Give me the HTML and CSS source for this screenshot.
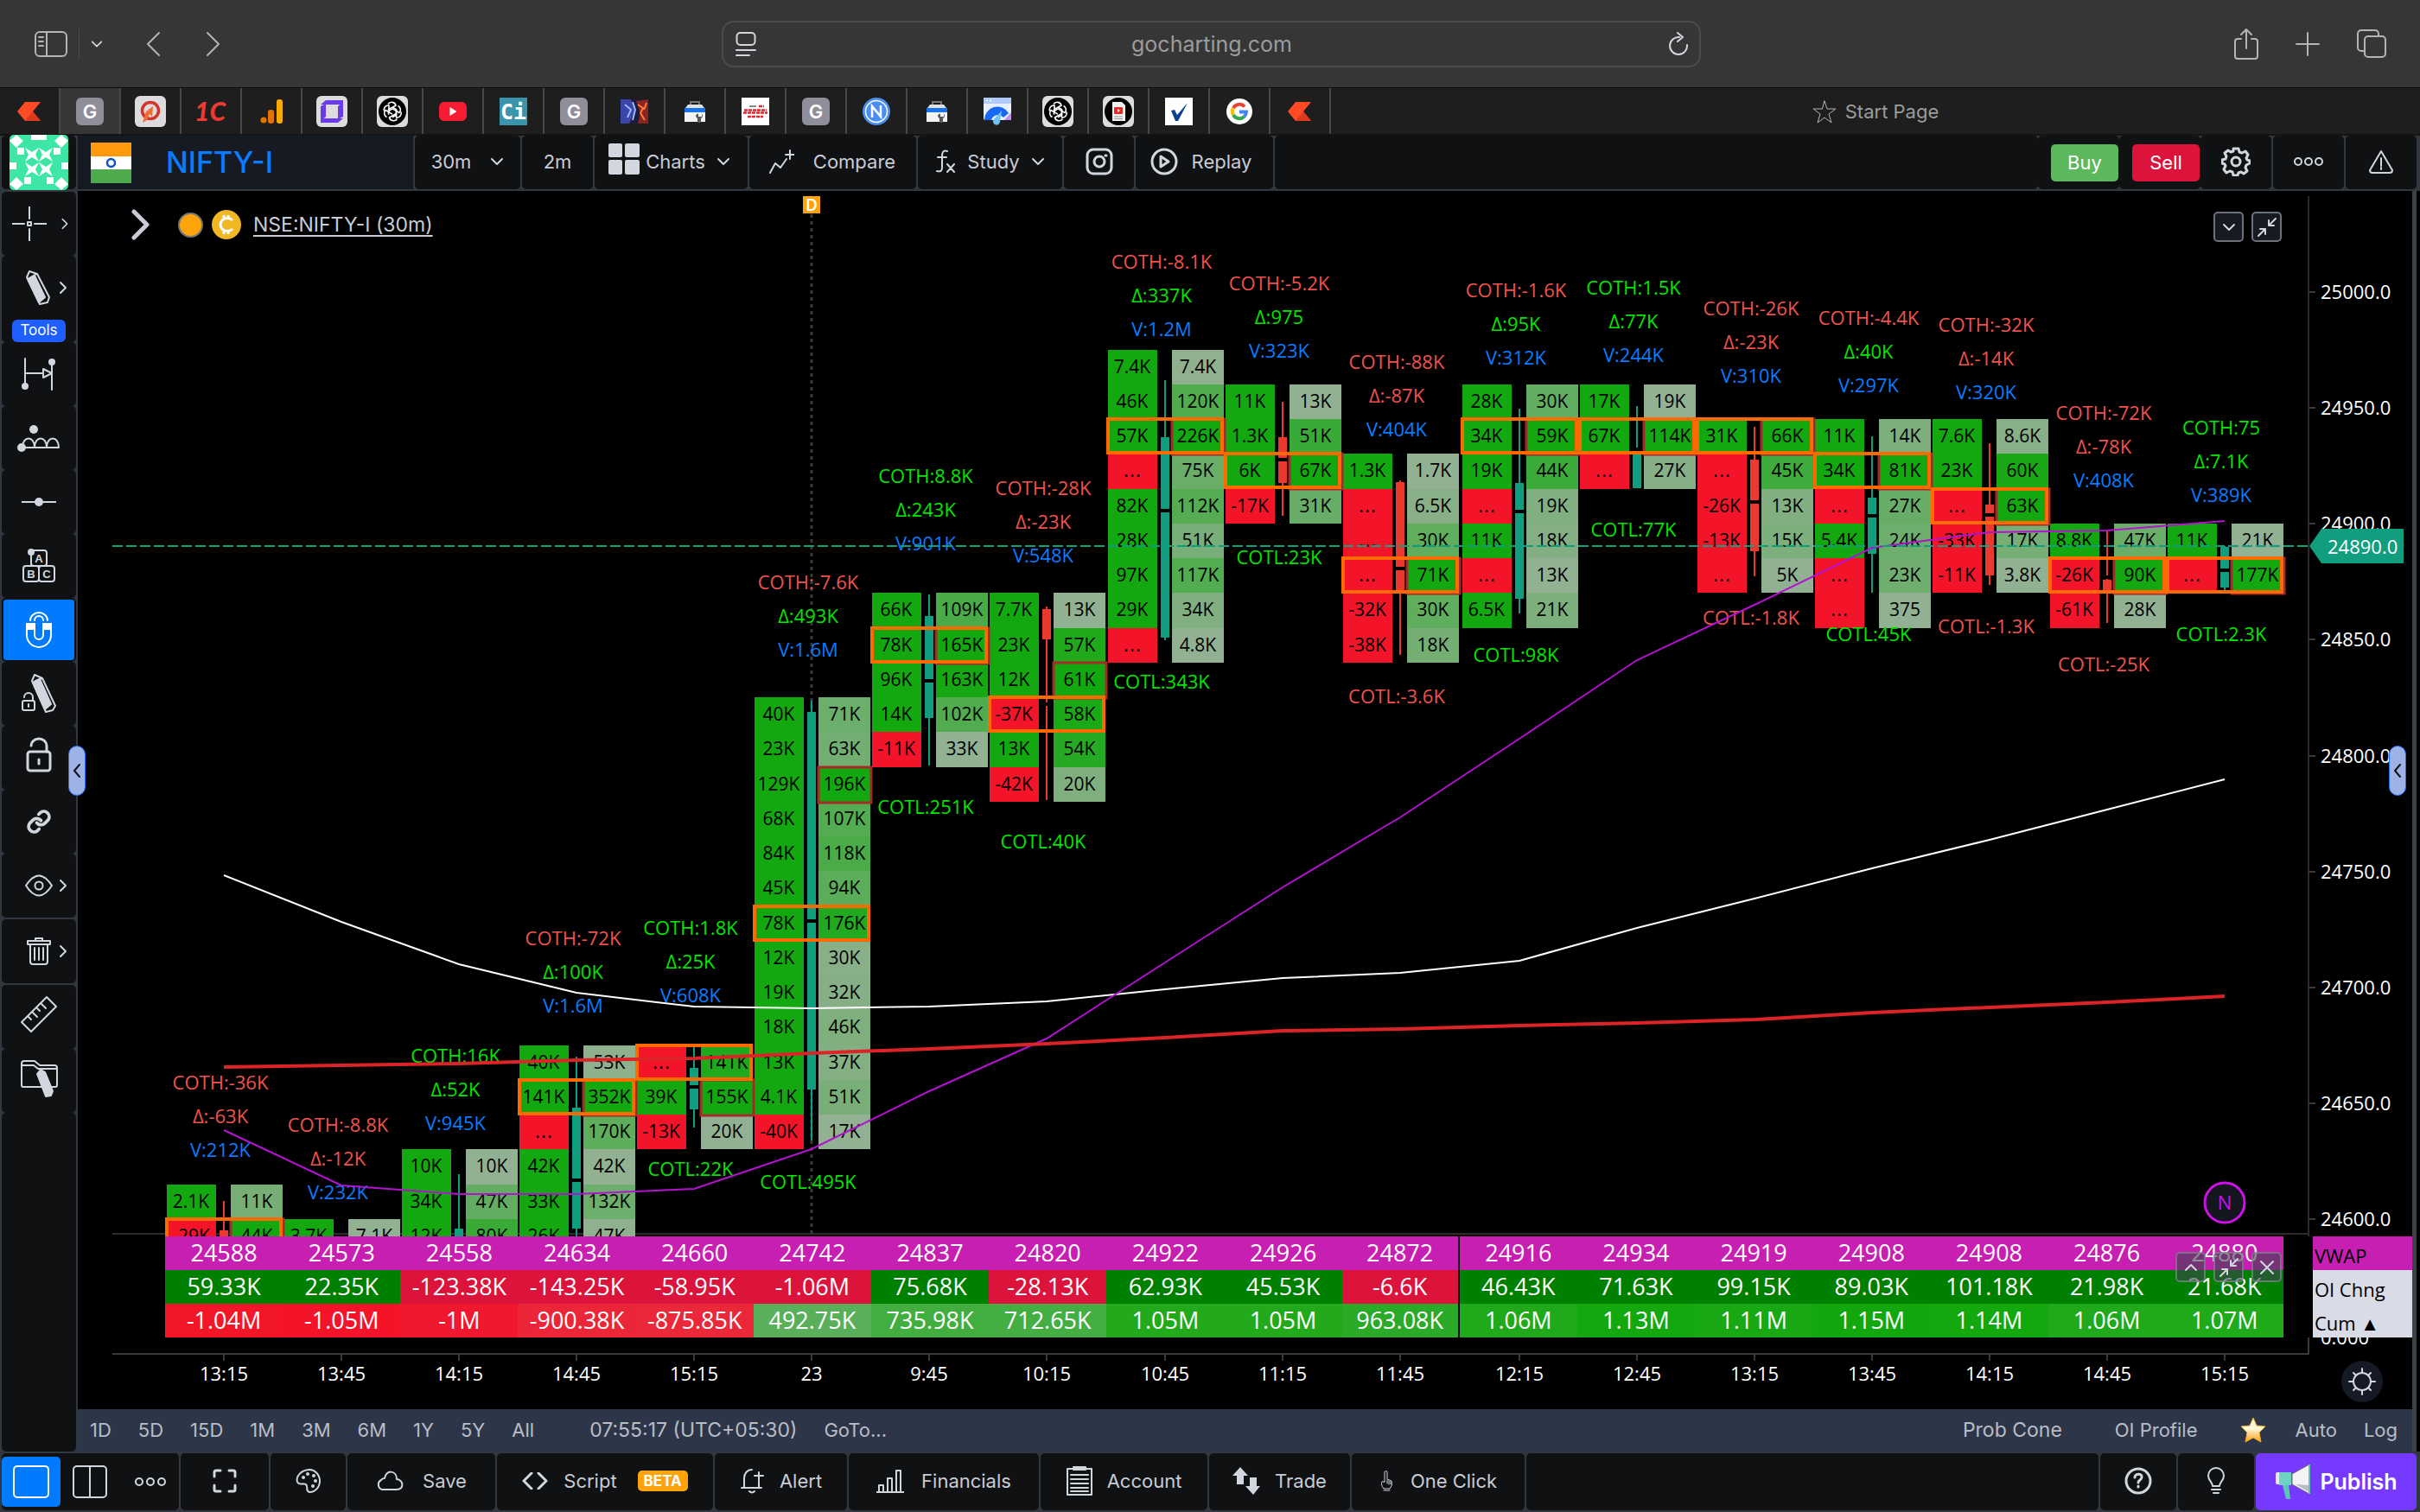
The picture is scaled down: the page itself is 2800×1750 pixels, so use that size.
FILE: index.html
```html
<!DOCTYPE html>
<html lang="en">
<head>
<meta charset="utf-8">
<title>NIFTY-I 30m</title>
<link rel="stylesheet" href="styles.css">
</head>
<body>
<svg class="sprite" aria-hidden="true">
  <symbol id="chev-down" viewBox="0 0 16 16"><path d="M2 5l6 6 6-6"/></symbol>
  <symbol id="chev-right" viewBox="0 0 16 16"><path d="M5 2l6 6-6 6"/></symbol>
  <symbol id="chev-left" viewBox="0 0 16 16"><path d="M11 1L5 8l6 7"/></symbol>
  <symbol id="shrink" viewBox="0 0 24 24"><path d="M22 2l-8 8M14 4v6h6M2 22l8-8M10 20v-6H4"/></symbol>
  <symbol id="fav-kite" viewBox="0 0 32 32"><path d="M2 16L11 5h18L20 16l9 11H11z" fill="#ff4a26"/><path d="M20 16l9 11H11z" fill="#dc3a1c"/></symbol>
  <symbol id="fav-g" viewBox="0 0 32 32"><rect width="32" height="32" rx="6" fill="#8f8e9b"/><text x="16" y="24" font-size="22" font-weight="600" text-anchor="middle" fill="#fff">G</text></symbol>
  <symbol id="fav-ai" viewBox="0 0 36 36"><rect width="36" height="36" rx="6" fill="#dcdcdc"/><circle cx="18" cy="18" r="16" fill="#000"/><g fill="none" stroke="#fff" stroke-width="1.6"><path d="M18 13l4.500 2.600v6.500l-4.500 2.600M13 9.500a5 5 0 0 1 9 1.500l-8.500 4.800v6"/><path d="M24.500 11.500a5 5 0 0 1 1.500 8l-7.800-4.600-5 3"/><path d="M28 18.500a5 5 0 0 1-5.500 6.500V16"/><path d="M23.500 26.500a5 5 0 0 1-9-1.500l8-4.500"/><path d="M11.500 24.500a5 5 0 0 1-1.500-8l8 4.600"/><path d="M8.500 17.500A5 5 0 0 1 14 11v9"/></g></symbol>
  <symbol id="fav-box" viewBox="0 0 32 32"><path d="M11 9V5h10v4" fill="none" stroke="#777" stroke-width="2"/><path d="M5 12l3-4h16l3 4z" fill="#dfe1e5"/><rect x="4" y="12" width="24" height="16" fill="#f1f3f4"/><rect x="4" y="12" width="24" height="5" fill="#1a73e8"/><path d="M17 21a3.500 3.500 0 0 0 2 3v5h4v-5a3.500 3.500 0 0 0 1-5.500V22h-4v-3.500a3 3 0 0 0-3 2.500z" fill="#555"/></symbol>
</svg>

<div class="browser">
  <div class="browser-side">
    <button class="plain" aria-label="Sidebar"><svg class="line" width="38" height="30" viewBox="0 0 38 30"><rect x="1" y="1" width="36" height="28" rx="5"/><path d="M14 1v28M5 7h5M5 12h5M5 17h5"/></svg></button>
    <span class="bar-sep"></span>
    <button class="plain" aria-label="Tab groups"><svg class="line bright" width="14" height="14" viewBox="0 0 16 16"><use href="#chev-down"/></svg></button>
    <div class="browser-nav">
      <button class="plain" aria-label="Back"><svg class="line" width="18" height="30" viewBox="0 0 18 30"><path d="M16 2L3 15l13 13"/></svg></button>
      <button class="plain" aria-label="Forward"><svg class="line" width="18" height="30" viewBox="0 0 18 30"><path d="M2 2l13 13L2 28"/></svg></button>
    </div>
  </div>
  <div class="address">
    <svg class="line bright" width="24" height="30" viewBox="0 0 24 30"><rect x="1.500" y="2" width="21" height="14" rx="4"/><path d="M1 22h22M1 28h15"/></svg>
    <input type="text" value="gocharting.com" aria-label="Address">
    <button class="plain" aria-label="Reload"><svg class="line bright" width="24" height="28" viewBox="0 0 24 28"><path d="M13 6a10 10 0 1 0 9 9M11 1l6 5-6 5"/></svg></button>
  </div>
  <div class="browser-actions">
    <button class="plain" aria-label="Share"><svg class="line" width="30" height="38" viewBox="0 0 30 38"><path d="M9 13H5a3 3 0 0 0-3 3v17a3 3 0 0 0 3 3h20a3 3 0 0 0 3-3V16a3 3 0 0 0-3-3h-4M15 24V2M9 8l6-6 6 6"/></svg></button>
    <button class="plain" aria-label="New tab"><svg class="line" width="28" height="28" viewBox="0 0 28 28"><path d="M14 1v26M1 14h26"/></svg></button>
    <button class="plain" aria-label="Tab overview"><svg class="line" width="36" height="36" viewBox="0 0 36 36"><rect x="10" y="9" width="24" height="24" rx="4"/><path d="M10 26H6a4 4 0 0 1-4-4V6a4 4 0 0 1 4-4h16a4 4 0 0 1 4 4v3"/></svg></button>
  </div>
</div>

<nav class="tabs">
  <a class="tab" href="#" aria-label="Tab 1"><svg width="32" height="32"><use href="#fav-kite"/></svg></a>
  <a class="tab active" href="#" aria-label="Tab 2"><svg width="32" height="32"><use href="#fav-g"/></svg></a>
  <a class="tab" href="#" aria-label="Tab 3"><svg width="36" height="36" viewBox="0 0 36 36"><rect width="36" height="36" rx="6" fill="#dcdcdc"/><circle cx="18" cy="17" r="9.500" fill="none" stroke="#d4322c" stroke-width="3.500"/><path d="M9 31l4-13 8-6-1 12-3-3-3 7z" fill="#ef6b2e"/></svg></a>
  <a class="tab" href="#" aria-label="Tab 4"><svg width="36" height="32" viewBox="0 0 36 32"><text x="17" y="27" class="fav-1c">1C</text></svg></a>
  <a class="tab" href="#" aria-label="Tab 5"><svg width="32" height="32" viewBox="0 0 32 32"><circle cx="7" cy="26" r="3.500" fill="#e37400"/><rect x="12" y="14" width="7" height="16" rx="3" fill="#e37400"/><rect x="22" y="2" width="7" height="28" rx="3" fill="#f9ab00"/></svg></a>
  <a class="tab" href="#" aria-label="Tab 6"><svg width="36" height="36" viewBox="0 0 36 36"><rect width="36" height="36" rx="6" fill="#dcdcdc"/><path d="M5 10l6-5h20v5zM31 26l-6 5H5v-5zM5 12l6-3v15l-6 5zM31 7v17l-6 3V12z" fill="#6a3be8"/></svg></a>
  <a class="tab" href="#" aria-label="Tab 7"><svg width="36" height="36"><use href="#fav-ai"/></svg></a>
  <a class="tab" href="#" aria-label="Tab 8"><svg width="32" height="32" viewBox="0 0 32 32"><rect y="5" width="32" height="22" rx="6" fill="#f61c34"/><path d="M12.500 11v10l8-5z" fill="#fff"/></svg></a>
  <a class="tab" href="#" aria-label="Tab 9"><svg width="32" height="32" viewBox="0 0 32 32"><rect width="32" height="32" fill="#3a94ac"/><text x="16" y="25" class="fav-ci">Ci</text></svg></a>
  <a class="tab" href="#" aria-label="Tab 10"><svg width="32" height="32"><use href="#fav-g"/></svg></a>
  <a class="tab" href="#" aria-label="Tab 11"><svg width="32" height="32" viewBox="0 0 32 32"><rect y="2" width="32" height="28" fill="#1d1c3c"/><path d="M0 2h12l5 12-7 16H0z" fill="#3945a8"/><path d="M18 4l14-2v28H20l3-12z" fill="#8c2420"/><path d="M5 8l7 6-4 9M14 5l3 9-3 12" stroke="#9fb4ff" stroke-width="2" fill="none"/><path d="M20 8l6 4-3 6 5 8M30 6l-3 8" stroke="#ff7a3c" stroke-width="2" fill="none"/></svg></a>
  <a class="tab" href="#" aria-label="Tab 12"><svg width="32" height="32"><use href="#fav-box"/></svg></a>
  <a class="tab" href="#" aria-label="Tab 13"><svg width="32" height="32" viewBox="0 0 32 32"><rect width="32" height="32" fill="#fff"/><path d="M9 10h8" stroke="#888" stroke-width="2"/><path d="M20 10h6M3 14.500h26M2 17.500h28M7 22h18" stroke="#e0232c" stroke-width="2.500" stroke-dasharray="4 1"/></svg></a>
  <a class="tab" href="#" aria-label="Tab 14"><svg width="32" height="32"><use href="#fav-g"/></svg></a>
  <a class="tab" href="#" aria-label="Tab 15"><svg width="32" height="32" viewBox="0 0 32 32"><circle cx="16" cy="16" r="16" fill="#4a8ff0"/><circle cx="16" cy="16" r="12.500" fill="none" stroke="#fff" stroke-width="1.500"/><path d="M11 23V10l10 12V9" fill="none" stroke="#fff" stroke-width="2.500"/></svg></a>
  <a class="tab" href="#" aria-label="Tab 16"><svg width="32" height="32"><use href="#fav-box"/></svg></a>
  <a class="tab" href="#" aria-label="Tab 17"><svg width="32" height="32" viewBox="0 0 32 32"><rect width="32" height="26" rx="2" fill="#e8f0fe"/><rect width="32" height="7" fill="#aecbfa"/><circle cx="4" cy="3.500" r="1" fill="#fff"/><circle cx="8" cy="3.500" r="1" fill="#fff"/><path d="M1 26a15 15 0 0 1 28-8l-6 5a8 8 0 0 0-14 3z" fill="#1967f2"/><path d="M32 17v9h-8z" fill="#c58af9"/><path d="M21 15l-9 10a4 4 0 1 0 7 3z" fill="#6fc3f0"/></svg></a>
  <a class="tab" href="#" aria-label="Tab 18"><svg width="36" height="36"><use href="#fav-ai"/></svg></a>
  <a class="tab" href="#" aria-label="Tab 19"><svg width="36" height="36" viewBox="0 0 36 36"><rect width="36" height="36" rx="6" fill="#dcdcdc"/><circle cx="18" cy="18" r="16" fill="#000"/><path d="M11 7h11l4 4v18H11z" fill="#f1f1f1"/><rect x="13" y="13" width="10" height="8" rx="1" fill="#e32b2b"/><path d="M17 15v4l3-2z" fill="#fff"/><path d="M13 24h10M13 26.500h10" stroke="#999"/></svg></a>
  <a class="tab" href="#" aria-label="Tab 20"><svg width="32" height="32" viewBox="0 0 32 32"><rect width="32" height="32" fill="#fff"/><path d="M7 15l4-1 3 6L26 6 15 27h-3z" fill="#0b3f91"/></svg></a>
  <a class="tab" href="#" aria-label="Tab 21"><svg width="32" height="32" viewBox="0 0 32 32"><circle cx="16" cy="16" r="15" fill="#fff"/><g fill="none" stroke-width="4"><path d="M22 10.500A8 8 0 0 0 9 12" stroke="#ea4335"/><path d="M9 12a8 8 0 0 0 0 8" stroke="#fbbc05"/><path d="M9 20a8 8 0 0 0 12.500 2" stroke="#34a853"/><path d="M21.500 22a8 8 0 0 0 2.500-5.500H16" stroke="#4285f4"/></g></svg></a>
  <a class="tab" href="#" aria-label="Tab 22"><svg width="32" height="32"><use href="#fav-kite"/></svg></a>
  <a class="tab start" href="#"><svg class="line thin" width="28" height="28" viewBox="0 0 28 28"><path d="M14 2l3 9h10l-8 6 3 10-8-6-8 6 3-10-8-6h10z"/></svg>Start Page</a>
</nav>

<header class="topbar">
  <div class="cell avatar">
    <svg width="68" height="64" viewBox="0 0 68 64"><rect width="68" height="64" rx="5" fill="#3ee6a6"/>
      <g fill="#fff"><path d="M8 0l8 7-8 8-8-8zM60 0l8 7-8 8-8-8zM8 49l8 8-8 7-8-7zM60 49l8 8-8 7-8-7zM25 0h18v6H25zM9 15h8v8H9zM51 15h8v8h-8zM17 49h8v8h-8zM43 49h8v8h-8zM0 32h8v8H0zM60 32h8v8h-8z"/>
      <path d="M18 15l8 5 8-5-4 8 4 8-8-5-8 5 4-8zM34 15l8 5 8-5-4 8 4 8-8-5-8 5 4-8zM18 32l8 5 8-5-4 8 4 8-8-5-8 5 4-8zM34 32l8 5 8-5-4 8 4 8-8-5-8 5 4-8z"/></g></svg>
  </div>
  <div class="cell symbol">
    <svg width="47" height="47" viewBox="0 0 47 47"><path d="M0 0h47v16H0z" fill="#ff9a0d"/><path d="M0 16h47v15H0z" fill="#fff"/><path d="M0 31h47v16H0z" fill="#4faa4b"/><circle cx="23.500" cy="23.500" r="4.500" fill="none" stroke="#0b53c4" stroke-width="2.500"/></svg>
    <a href="#">NIFTY-I</a>
  </div>
  <button class="cell tf">30m<svg class="line bright" width="16" height="16"><use href="#chev-down"/></svg></button>
  <button class="cell tf2">2m</button>
  <button class="cell charts"><svg width="36" height="36" viewBox="0 0 36 36"><g fill="#d3d6df"><rect width="16" height="16" rx="2"/><rect x="19" width="17" height="16" rx="2"/><rect y="19" width="16" height="17" rx="2"/><rect x="19" y="19" width="17" height="17" rx="2"/></g></svg>Charts<svg class="line bright" width="16" height="16"><use href="#chev-down"/></svg></button>
  <button class="cell compare"><svg class="line bright" width="30" height="28" viewBox="0 0 30 28"><path d="M2 27l6-11 6 5 7-10M25 1v10M20 6h10"/></svg>Compare</button>
  <button class="cell study"><svg class="line bright" width="24" height="28" viewBox="0 0 24 28"><path d="M14 2c-5-2-6 2-6 6v13c0 4-2 5-6 4M3 9h10M14 17l8 9M22 17l-8 9"/></svg>Study<svg class="line bright" width="16" height="16"><use href="#chev-down"/></svg></button>
  <button class="cell shot" aria-label="Snapshot"><svg class="line bright w3" width="32" height="32" viewBox="0 0 32 32"><rect x="2" y="2" width="28" height="28" rx="7"/><circle cx="16" cy="16" r="6"/><path d="M23 9h1"/></svg></button>
  <button class="cell replay"><svg class="line bright w3" width="32" height="32" viewBox="0 0 32 32"><circle cx="16" cy="16" r="14"/><path d="M12 10v12l9-6z"/></svg>Replay</button>
  <div class="cell grow"></div>
  <div class="cell order"><button class="buy">Buy</button></div>
  <div class="cell order"><button class="sell">Sell</button></div>
  <button class="cell sq" aria-label="Settings"><svg class="line bright w3" width="34" height="34" viewBox="0 0 34 34"><circle cx="17" cy="17" r="5"/><path d="M14 2h6l1 4 3 1 4-2 3 4-2 4 1 2 3 1v3l-4 2-1 3 2 4-4 3-3-2-3 1-1 3h-5l-1-4-3-1-4 2-3-4 2-4-1-2-3-1v-4l4-1 1-3-2-4 4-3 3 2 3-1z"/></svg></button>
  <button class="cell sq" aria-label="More"><svg class="line bright" width="36" height="12" viewBox="0 0 36 12"><circle cx="6" cy="6" r="4"/><circle cx="18" cy="6" r="4"/><circle cx="30" cy="6" r="4"/></svg></button>
  <button class="cell sq" aria-label="Warnings"><svg class="line bright" width="30" height="28" viewBox="0 0 30 28"><path d="M15 2l13 22q0 3-3 3H5q-3 0-3-3zM15 10v9M15 21v2"/></svg></button>
</header>

<main class="work">
  <aside class="tools">
    <button class="tool cursor" aria-label="Cursor"><svg class="line bright" width="40" height="40" viewBox="0 0 40 40"><path d="M20 0v14M20 26v14M0 20h14M26 20h14"/><rect x="18" y="18" width="4" height="4"/></svg><svg class="line bright" width="14" height="14" viewBox="0 0 16 16"><use href="#chev-right"/></svg></button>
    <button class="tool draw"><svg class="line bright" width="40" height="40" viewBox="0 0 40 40"><path d="M6 8l3-7 9 3 14 27-2 6-9 2zM9 9l8-5"/><path d="M7 10l8-4 12 25-7 6z" fill="currentColor"/></svg><svg class="line bright" width="16" height="16"><use href="#chev-right"/></svg><span class="tag">Tools</span></button>
    <button class="tool" aria-label="Range"><svg class="line bright" width="40" height="40" viewBox="0 0 40 40"><path d="M4 2v32M35 6v32M4 19h21M25 14v10l10-5z"/><circle cx="4" cy="34" r="4" fill="currentColor" stroke="none"/><circle cx="35" cy="6" r="4" fill="currentColor" stroke="none"/></svg></button>
    <button class="tool" aria-label="Cycles"><svg class="line bright" width="50" height="32" viewBox="0 0 50 32"><path d="M5 27h43M6 27c0-14 14-14 14 0c0-14 14-14 14 0c0-14 14-14 14 0"/><circle cx="19" cy="6" r="5" fill="currentColor" stroke="none"/><circle cx="5" cy="27" r="5" fill="currentColor" stroke="none"/></svg></button>
    <button class="tool" aria-label="Line"><svg class="line bright" width="40" height="12" viewBox="0 0 40 12"><path d="M0 6h40"/><circle cx="20" cy="6" r="5" fill="currentColor" stroke="none"/></svg></button>
    <button class="tool" aria-label="Patterns"><svg class="line bright" width="40" height="40" viewBox="0 0 40 40"><rect x="11" y="2" width="18" height="18" rx="3"/><rect x="2" y="20" width="18" height="18" rx="3"/><rect x="20" y="20" width="18" height="18" rx="3"/><circle cx="11" cy="4" r="4" fill="currentColor" stroke="none"/><g class="abc"><text x="20" y="16">A</text><text x="11" y="34">B</text><text x="29" y="34">C</text></g></svg></button>
    <button class="tool on" aria-label="Magnet"><svg class="line" width="32" height="44" viewBox="0 0 32 44"><path d="M2 15h9v13a5 5 0 0 0 10 0V15h9v13a14 14 0 0 1-28 0zM6 11a10 9 0 0 1 20 0M11 11a5 5 0 0 1 10 0"/><path d="M2 15h9v6H2zM21 15h9v6h-9z" fill="currentColor"/></svg></button>
    <button class="tool" aria-label="Lock drawing"><svg class="line bright" width="42" height="46" viewBox="0 0 42 46"><path d="M13 8l3-7 9 4 15 32-3 5-8 2zM17 8l8-3"/><path d="M14 10l8-4 13 29-7 6z" fill="currentColor"/><rect x="2" y="31" width="14" height="11" rx="2"/><path d="M4 27a5 5 0 0 1 10 0v4M9 35v3"/></svg></button>
    <button class="tool high" aria-label="Unlock"><svg class="line bright w3" width="30" height="42" viewBox="0 0 30 42"><rect x="2" y="17" width="26" height="22" rx="3"/><path d="M6 10a9 8 0 0 1 18 0v7M15 26v5"/></svg></button>
    <button class="tool" aria-label="Link"><svg class="line bright w3" width="30" height="30" viewBox="0 0 24 24"><path d="M10 13a5 5 0 0 0 7.500.5l3-3a5 5 0 0 0-7-7l-1.700 1.700M14 11a5 5 0 0 0-7.500-.5l-3 3a5 5 0 0 0 7 7l1.700-1.700"/></svg></button>
    <button class="tool" aria-label="Visibility"><svg class="line bright" width="34" height="26" viewBox="0 0 34 26"><path d="M2 13q15-23 30 0q-15 23-30 0z"/><circle cx="17" cy="13" r="4.500"/></svg><svg class="line bright" width="16" height="16"><use href="#chev-right"/></svg></button>
    <button class="tool sep" aria-label="Delete"><svg class="line bright" width="30" height="34" viewBox="0 0 30 34"><path d="M2 5h26v4H2zM11 5V2h8v3M5 9v20a3 3 0 0 0 3 3h14a3 3 0 0 0 3-3V9M10 13v14M15 13v14M20 13v14"/></svg><svg class="line bright" width="16" height="16"><use href="#chev-right"/></svg></button>
    <button class="tool sep high" aria-label="Measure"><svg class="line bright" width="44" height="44" viewBox="0 0 44 44"><path d="M2 31L31 2l11 11-29 29zM9 24l4 4M14 19l6 6M19 14l4 4M24 9l6 6"/></svg></button>
    <button class="tool high" aria-label="Saved drawings"><svg class="line bright" width="44" height="44" viewBox="0 0 44 44"><path d="M2 5a3 3 0 0 1 3-3h12l6 5h17a3 3 0 0 1 3 3v20a2 2 0 0 1-2 2H4a2 2 0 0 1-2-2zM2 7h14l5 4h22"/><path d="M20 17l4-5 5 3 9 22-2 5-6 1z" fill="currentColor"/></svg></button>
    <div class="tool rest"></div>
    <button class="handle" aria-label="Collapse tools"><svg class="line" width="16" height="20"><use href="#chev-left"/></svg></button>
  </aside>

  <section class="stage">
    <div class="pane">
      <svg id="plot" class="fluid" viewBox="90 221 2701 1210" role="img" aria-label="Footprint chart"></svg>
      <div class="legend">
        <svg class="line thick" width="22" height="36" viewBox="0 0 22 36"><path d="M3 3l15 15L3 33"/></svg>
        <span class="dot"></span>
        <svg width="34" height="34" viewBox="0 0 34 34"><circle cx="17" cy="17" r="17" fill="#f2b824"/><path d="M24 12a8 7.500 0 1 0 0 10M14 6v4M19 6v3M14 24v4M19 25v3" fill="none" stroke="#fff" stroke-width="3"/></svg>
        <a href="#">NSE:NIFTY-I (30m)</a>
      </div>
      <div class="pane-tools top">
        <button aria-label="Menu"><svg class="line bright" width="16" height="16"><use href="#chev-down"/></svg></button>
        <button aria-label="Shrink"><svg class="line bright" width="24" height="24"><use href="#shrink"/></svg></button>
      </div>
    </div>
    <div class="heat">
      <table><colgroup><col span="18" class="c-val"><col class="c-gap"><col class="c-name"></colgroup><tbody id="heat"></tbody></table>
      <div class="pane-tools low">
        <button aria-label="Move up"><svg class="line bright" width="16" height="16" viewBox="0 0 16 16"><path d="M2 11l6-6 6 6"/></svg></button>
        <button aria-label="Shrink"><svg class="line bright" width="24" height="24"><use href="#shrink"/></svg></button>
        <button aria-label="Close"><svg class="line bright" width="18" height="18" viewBox="0 0 18 18"><path d="M2 2l14 14M16 2L2 16"/></svg></button>
      </div>
    </div>
    <div class="times">
      <svg id="axis" class="fluid" viewBox="90 1548 2701 83" role="img" aria-label="Time axis"></svg>
      <button class="sun" aria-label="Theme"><svg class="line bright" width="32" height="32" viewBox="0 0 32 32"><circle cx="16" cy="16" r="10"/><path d="M16 1v5M16 26v5M1 16h5M26 16h5M6 6l3 3M23 23l3 3M6 26l3-3M23 9l3-3"/></svg></button>
    </div>
    <div class="ranges">
      <button>1D</button><button>5D</button><button>15D</button><button>1M</button><button>3M</button><button>6M</button><button>1Y</button><button>5Y</button><button>All</button>
      <span class="clock">07:55:17 (UTC+05:30)</span><button>GoTo...</button>
      <span class="grow"></span>
      <button class="wide">Prob Cone</button><button>OI Profile</button>
      <svg class="fav" width="30" height="30" viewBox="0 0 30 30"><defs><linearGradient id="gold" x2="0" y2="1"><stop offset=".45" stop-color="#fff8dc"/><stop offset="1" stop-color="#ff9d0a"/></linearGradient></defs><path d="M15 1l4 9 10 1-7 7 2 11-9-5-9 5 2-11-7-7 10-1z" fill="url(#gold)" stroke="#f0b020"/></svg>
      <button>Auto</button><button>Log</button>
    </div>
    <button class="handle right" aria-label="Open panel"><svg class="line" width="16" height="20"><use href="#chev-left"/></svg></button>
  </section>
</main>

<footer class="bottombar">
  <div class="cell layouts">
    <button class="single" aria-label="Single chart"><svg class="line" width="42" height="38" viewBox="0 0 42 38"><rect x="1" y="1" width="40" height="36" rx="4"/></svg></button>
    <button class="plain" aria-label="Two charts"><svg class="line bright" width="40" height="38" viewBox="0 0 40 38"><rect x="1" y="1" width="38" height="36" rx="4"/><path d="M20 1v36"/></svg></button>
    <button class="plain" aria-label="More layouts"><svg class="line bright" width="38" height="12" viewBox="0 0 38 12"><circle cx="6" cy="6" r="4"/><circle cx="19" cy="6" r="4"/><circle cx="32" cy="6" r="4"/></svg></button>
  </div>
  <button class="cell b-full" aria-label="Full screen"><svg class="line bright w3" width="28" height="28" viewBox="0 0 28 28"><path d="M2 9V4a2 2 0 0 1 2-2h5M19 2h5a2 2 0 0 1 2 2v5M26 19v5a2 2 0 0 1-2 2h-5M9 26H4a2 2 0 0 1-2-2v-5"/></svg></button>
  <button class="cell b-pal" aria-label="Theme colours"><svg class="line bright" width="30" height="30" viewBox="0 0 30 30"><path d="M15 2C6 3 0 10 2 16c2 5 7 1 10 3 3 3-1 8 4 9 7 0 12-6 12-13S22 1 15 2z"/><g fill="currentColor" stroke="none"><circle cx="9" cy="11" r="2"/><circle cx="14" cy="7" r="2"/><circle cx="21" cy="9" r="2"/><circle cx="23" cy="15" r="2"/><circle cx="20" cy="21" r="2"/></g></svg></button>
  <button class="cell b-save"><svg class="line bright" width="32" height="24" viewBox="0 0 32 24"><path d="M7 22a6 6 0 0 1-1-11c1-2 2-2 4-2 1-10 14-10 14 1 8 1 9 12 0 12z"/></svg>Save</button>
  <button class="cell b-script"><svg class="line bright w3" width="30" height="20" viewBox="0 0 30 20"><path d="M11 1L2 10l9 9M19 1l9 9-9 9"/></svg>Script<span class="beta">BETA</span></button>
  <button class="cell b-alert"><svg class="line bright" width="30" height="30" viewBox="0 0 30 30"><path d="M2 23h23M5 23V12c0-6 4-10 9-10M22 23v-8M22 5v9M17 9h10M11 27q3 3 6 0"/></svg>Alert</button>
  <button class="cell b-fin"><svg class="line bright" width="32" height="28" viewBox="0 0 32 28"><path d="M0 27h32M3 27v-8h5v8M13 27V11h5v16M23 27V2h5v25"/></svg>Financials</button>
  <button class="cell b-acc"><svg class="line bright" width="30" height="34" viewBox="0 0 30 34"><rect x="1" y="3" width="28" height="30"/><path d="M8 1h14v3H8zM5 10h20M5 15h20M5 20h20M5 25h20M5 29h20"/></svg>Account</button>
  <button class="cell b-trade"><svg width="32" height="32" viewBox="0 0 32 32"><path d="M9 0l9 10h-5v10H5V10H0zM24 32l-9-10h5V12h8v10h4z" fill="#d3d6df"/></svg>Trade</button>
  <button class="cell b-click"><svg class="line bright thin" width="16" height="24" viewBox="0 0 16 24"><path d="M6 13V2a1 1 0 0 1 3 0v8l5 2q2 5-2 9H5q-4-5-2-8zM9 11v4M11 12v4M13 13v3M5 23h7"/></svg>One Click</button>
  <div class="cell grow"></div>
  <button class="cell b-help" aria-label="Help"><svg class="line bright w3" width="32" height="32" viewBox="0 0 32 32"><circle cx="16" cy="16" r="14"/><path d="M12 12c0-5 9-5 8 0 0 3-4 3-4 6M16 22v1"/></svg></button>
  <button class="cell b-help" aria-label="Ideas"><svg class="line bright" width="24" height="32" viewBox="0 0 24 32"><path d="M8 22c0-5-5-6-5-12a9 9 0 0 1 18 0c0 6-5 7-5 12zM7 26h10M9 30h6"/></svg></button>
  <button class="publish"><svg width="42" height="42" viewBox="0 0 42 42"><path d="M20 12L40 1v34L20 24z" fill="#f4f4f6" stroke="#777" stroke-width="1"/><path d="M24 24l16 9V25z" fill="#b9bcc4"/><rect x="1" y="10" width="6" height="14" rx="2" fill="#e8ecf0"/><rect x="5" y="10" width="14" height="15" fill="#6fd0c4"/><path d="M9 25h7l2 16h-5z" fill="#5cc5b8"/><path d="M40 1v34" stroke="#5cc5b8" stroke-width="2"/></svg>Publish</button>
</footer>
<script src="chart.js"></script>
</body>
</html>
```
FILE: styles.css
```css
* { box-sizing: border-box; }
body {
  margin: 0;
  min-height: 100vh;
  display: flex;
  flex-direction: column;
  background: #000;
  color: #c9ccd4;
  font: 22px/28px Inter, "Liberation Sans", sans-serif;
}
button {
  font: inherit;
  color: inherit;
  border: 0;
  padding: 0;
  background: none;
  white-space: nowrap;
}
a { color: inherit; text-decoration: none; }
svg { flex: none; display: block; }
.sprite { position: absolute; width: 0; height: 0; }
.line { fill: none; stroke: currentColor; stroke-width: 2; stroke-linecap: round; stroke-linejoin: round; color: #b4b4b8; }
.bright { color: #d3d6df; }
.w3 { stroke-width: 3; }
.thin { stroke-width: 1; }
.thick { stroke-width: 5; color: #c9ccd4; }
.grow { flex: 1; }
.plain { display: flex; align-items: center; }

/* browser chrome */
.browser {
  height: 101px;
  background: #363636;
  display: grid;
  grid-template-columns: 1fr 1133px 1fr;
  align-items: center;
  padding: 0 38px 0 40px;
}
.browser-side { display: flex; align-items: center; gap: 13px; }
.bar-sep { width: 1px; height: 35px; background: #4b4b4b; }
.browser-nav { display: flex; gap: 52px; margin-left: 36px; }
.address {
  height: 54px;
  border: 2px solid #4b4b4b;
  border-radius: 14px;
  display: flex;
  align-items: center;
  padding: 0 12px 0 14px;
}
.address input {
  flex: 1;
  min-width: 0;
  border: 0;
  background: none;
  color: #9c9c9c;
  font: 25px/32px Inter, "Liberation Sans", sans-serif;
  text-align: center;
}
.browser-actions { display: flex; align-items: center; justify-content: flex-end; gap: 42px; }

.tabs { display: flex; height: 56px; background: #1e1e1e; border-top: 1px solid #0c0c0c; border-bottom: 2px solid #141414; }
.tab { width: 70px; border-right: 2px solid #474747; display: flex; align-items: center; justify-content: center; }
.tab.active { background: #363636; }
.tab.start { flex: 1; border: 0; gap: 10px; font-size: 22px; color: #9c9c9c; }
.fav-1c { font: italic 900 30px Lato, sans-serif; fill: #ec3a30; text-anchor: middle; }
.fav-ci { font: bold 25px "DejaVu Sans Mono", monospace; fill: #fff; text-anchor: middle; }

/* header and footer bars */
.topbar, .bottombar { display: flex; gap: 2px; background: #30373f; }
.topbar { height: 64px; padding: 0 4px 2px 2px; }
.bottombar { height: 70px; padding: 2px 4px 2px 2px; }
.cell { background: #101113; border-radius: 5px; display: flex; align-items: center; justify-content: center; }
.topbar button.cell { padding-bottom: 2px; }
.avatar { width: 86px; }
.symbol { width: 388px; background: #151a23; justify-content: flex-start; padding-left: 15px; gap: 40px; border-radius: 0; }
.symbol a { color: #0a7cff; font-size: 34px; line-height: 40px; font-weight: 500; }
.tf { width: 122px; gap: 22px; }
.tf2 { width: 82px; }
.charts { width: 177px; gap: 7px; }
.charts svg:first-child { margin-bottom: 6px; }
.charts svg:last-child { margin-left: 6px; }
.topbar .charts { padding-right: 4px; }
.compare { width: 193px; gap: 22px; }
.topbar .compare { padding-right: 2px; }
.study { width: 167px; gap: 13px; }
.shot { width: 81px; }
.replay { width: 159px; gap: 16px; }
.topbar .replay { padding-right: 8px; }
.topbar .grow { margin-right: -2px; }
.order { width: 94px; margin-right: -2px; justify-content: flex-end; padding-right: 1px; }
.buy, .sell { width: 78px; height: 43px; border-radius: 5px; color: #fff; }
.buy { background: #5cb85c; }
.sell { background: #dc143c; }
.sq { width: 82px; }

/* work area */
.work { display: grid; grid-template-columns: 90px minmax(0, 1fr) 9px; flex: 1; }
.work::after { content: ""; background: #000; border-left: 5px solid #3a424a; }
.tools { position: relative; display: flex; flex-direction: column; background: #30373f; padding: 1px 2px 0 2px; }
.tool {
  min-height: 74px;
  border-radius: 5px;
  background: #101113;
  display: grid;
  grid-template-columns: 1fr 40px 1fr;
  align-items: center;
}
.tool > svg:first-child { grid-column: 2; justify-self: center; }
.tool.cursor { grid-template-columns: 12px 40px 1fr; }
.tool.cursor > svg:last-child { justify-self: end; margin-right: 6px; }
.tool.draw { min-height: 100px; grid-template-rows: 74px 26px; }
.tool.high { padding-bottom: 7px; }
.tag { grid-column: 1 / -1; justify-self: center; width: 62px; height: 26px; border-radius: 6px; background: #1f5eff; color: #fff; font-size: 17px; line-height: 25px; text-align: center; }
.tool.sep { margin-top: 2px; }
.tool.on { background: #007bff; border: 2px solid #101113; }
.tool.on .line { color: #fff; }
.tool.rest { flex: 1; }
.abc { font: bold 13px "Liberation Sans", sans-serif; text-anchor: middle; fill: currentColor; stroke: none; }
.handle {
  position: absolute;
  left: 79px;
  top: 642px;
  z-index: 2;
  width: 20px;
  height: 58px;
  border: 1px solid #1f6ff5;
  border-radius: 10px;
  background: #9fb2e8;
  display: grid;
  place-items: center;
}
.handle .line { color: #111; }
.handle.right { left: auto; right: 7px; }

.stage { position: relative; display: flex; flex-direction: column; background: #000; }
.fluid { width: 100%; height: auto; font-family: "Open Sans", "Noto Sans", sans-serif; font-size: 22px; }
.fluid text { text-anchor: middle; }
.fluid .start { text-anchor: start; fill: #fff; }
.fluid .cell-text { font-size: 21px; fill: #000; }
.fluid .dots { font: 22px "DejaVu Sans", sans-serif; fill: #000; }
.pane, .heat, .times { position: relative; }
.legend { position: absolute; left: 62px; top: 21px; display: flex; align-items: center; height: 36px; }
.legend a { margin-left: 14px; font-size: 23px; text-decoration: underline; text-underline-offset: 4px; }
.dot { width: 29px; height: 29px; border: 2px solid #777; border-radius: 50%; background: #ffa30a; margin: 0 10px 0 32px; }
.pane-tools { position: absolute; right: 151px; display: flex; gap: 9px; }
.pane-tools.top { top: 24px; }
.pane-tools.low { top: 18px; }
.pane-tools button { width: 35px; height: 35px; border: 2px solid #6c717c; border-radius: 5px; background: #151a23; display: grid; place-items: center; }
.pane-tools.low button { background: rgb(60 66 78 / .6); border-color: rgb(140 146 158 / .6); }

.heat { display: grid; grid-template-columns: 101fr 2600fr; }
.heat table { grid-column: 2; width: 100%; table-layout: fixed; border-collapse: separate; border-spacing: 0; }
.c-val { width: 5.237%; }
.c-gap { width: 1.311%; }
.heat td, .heat th { height: 39px; padding: 0; overflow: hidden; }
.heat td { font: 27px/37px "Open Sans", "Noto Sans", sans-serif; color: #fff; text-align: center; white-space: nowrap; padding-bottom: 2px; }
.heat th { font: 22px/28px "Open Sans", "Noto Sans", sans-serif; color: #000; background: #d9dbe6; text-align: left; padding: 6px 0 2px 2px; white-space: nowrap; }
.heat td:nth-child(11) { border-right: 2px solid #000; }
.heat .vwap td, .heat .vwap th { background: #c71fb2; }
.heat td.gap { background: none; }
.heat .up { background: #008000; }
.heat .down { background: #dc143c; }
.sun { position: absolute; right: 34px; top: 27px; width: 48px; height: 48px; border-radius: 50%; background: #151a26; display: grid; place-items: center; }

.ranges { height: 49px; background: #2d3648; display: flex; align-items: center; gap: 31px; padding: 0 17px 2px 14px; color: #b9bdc6; }
.clock { margin-left: 33px; font-size: 23px; }
.ranges .wide { margin-right: 30px; font-size: 23px; }
.ranges .fav { margin: 0 3px 0 18px; }

.layouts { width: 205px; justify-content: flex-start; gap: 14px; }
.layouts .plain:last-child { margin-left: 17px; }
.single { width: 68px; height: 58px; border-radius: 5px; background: #007bff; display: grid; place-items: center; }
.single .line { color: #fff; }
.bottombar button.cell { padding-bottom: 2px; }
.b-full { width: 102px; }
.b-pal { width: 87px; }
.b-save { width: 171px; gap: 22px; }
.b-script { width: 250px; gap: 18px; }
.beta { background: #ffa30a; color: #fff; font-size: 17px; line-height: 24px; font-weight: 700; border-radius: 5px; padding: 0 7px; margin-left: 6px; }
.b-alert { width: 153px; gap: 16px; }
.b-fin { width: 220px; gap: 20px; }
.b-acc { width: 193px; gap: 17px; }
.b-trade { width: 163px; gap: 17px; }
.b-click { width: 200px; gap: 20px; }
.b-help { width: 88px; }
.publish { width: 186px; background: #7639ff; border-radius: 5px; color: #fff; font-size: 25px; font-weight: 600; display: flex; align-items: center; justify-content: center; gap: 10px; }
```
FILE: chart.js
```js
const GREEN = '#00e600', RED = '#f0524f', BLUE = '#0a7cff', TEAL = '#109e7f', CANDLE_RED = '#ea3a30';
const ROW_TOP = 404.5, ROW = 40.25;
const colX = i => Math.round(258.7 + 136.1 * i + (i > 10 ? 1.7 : 0));
const rowY = k => Math.round(ROW_TOP + ROW * k);

// t: time, k: first row, rows: "bid|ask", poc: boxed row, max: largest ask row
// hi/lo: wick ends, body: body ends, gap: break in the candle
const bars = [
  { t: '13:15', k: 24, rows: ['2.1K|11K', '-29K|44K'], floor: 2, poc: 1, max: 1, hi: 1390, lo: 1440, body: [1424, 1440], up: 0, h: '-36K', d: '-63K', v: '212K' },
  { t: '13:45', k: 25, rows: ['3.7K|7.1K'], hi: 1439, up: 0, h: '-8.8K', d: '-12K', v: '232K' },
  { t: '14:15', k: 23, rows: ['10K|10K', '34K|47K', '12K|80K'], ceil: 110, hi: 1359, lo: 1440, body: [1422, 1440], up: 1, h: '16K', d: '52K', v: '945K' },
  { t: '14:45', k: 20, rows: ['40K|53K', '141K|352K', '...|170K', '42K|42K', '33K|132K', '26K|47K'], poc: 1, max: 1, hi: 1223, lo: 1440, body: [1282, 1422], gap: 1366, up: 1, h: '-72K', d: '100K', v: '1.6M' },
  { t: '15:15', k: 20, rows: ['...|141K', '39K|155K', '-13K|20K'], poc: 0, max: 1, hi: 1211, lo: 1305, body: [1236, 1284], gap: 1258, up: 1, h: '1.8K', d: '25K', v: '608K', l: '22K' },
  { t: '23', k: 10, rows: ['40K|71K', '23K|63K', '129K|196K', '68K|107K', '84K|118K', '45K|94K', '78K|176K', '12K|30K', '19K|32K', '18K|46K', '13K|37K', '4.1K|51K', '-40K|17K'], poc: 6, max: 2, hi: 811, lo: 1320, body: [824, 1261], gap: 1066, up: 1, h: '-7.6K', d: '493K', v: '1.6M', l: '495K' },
  { t: '9:45', k: 7, rows: ['66K|109K', '78K|165K', '96K|163K', '14K|102K', '-11K|33K'], poc: 1, max: 1, hi: 688, lo: 886, body: [713, 831], gap: 788, up: 1, h: '8.8K', d: '243K', v: '901K', l: '251K' },
  { t: '10:15', k: 7, rows: ['7.7K|13K', '23K|57K', '12K|61K', '-37K|58K', '13K|54K', '-42K|20K'], poc: 3, max: 2, hi: 702, lo: 926, body: [705, 740], gap: 815, up: 0, h: '-28K', d: '-23K', v: '548K', l: '40K' },
  { t: '10:45', k: 0, rows: ['7.4K|7.4K', '46K|120K', '57K|226K', '...|75K', '82K|112K', '28K|51K', '97K|117K', '29K|34K', '...|4.8K'], poc: 2, max: 2, hi: 440, lo: 741, body: [506, 738], gap: 591, up: 1, h: '-8.1K', d: '337K', v: '1.2M', l: '343K' },
  { t: '11:15', k: 1, rows: ['11K|13K', '1.3K|51K', '6K|67K', '-17K|31K'], poc: 2, max: 2, hi: 465, lo: 597, body: [506, 559], gap: 532, up: 0, h: '-5.2K', d: '975', v: '323K', l: '23K' },
  { t: '11:45', k: 3, rows: ['1.3K|1.7K', '...|6.5K', '...|30K', '...|71K', '-32K|30K', '-38K|18K'], poc: 3, max: 3, hi: 556, lo: 758, body: [558, 683], gap: 658, up: 0, h: '-88K', d: '-87K', v: '404K', l: '-3.6K' },
  { t: '12:15', k: 1, rows: ['28K|30K', '34K|59K', '19K|44K', '...|19K', '11K|18K', '...|13K', '6.5K|21K'], poc: 1, max: 1, hi: 473, lo: 710, body: [559, 693], gap: 592, up: 1, h: '-1.6K', d: '95K', v: '312K', l: '98K' },
  { t: '12:45', k: 1, rows: ['17K|19K', '67K|114K', '...|27K'], poc: 1, max: 1, hi: 470, lo: 565, body: [526, 565], gap: 520, up: 1, h: '1.5K', d: '77K', v: '244K', l: '77K' },
  { t: '13:15', k: 2, rows: ['31K|66K', '...|45K', '-26K|13K', '-13K|15K', '...|5K'], poc: 0, max: 0, hi: 494, lo: 667, body: [532, 638], gap: 581, up: 0, h: '-26K', d: '-23K', v: '310K', l: '-1.8K' },
  { t: '13:45', k: 2, rows: ['11K|14K', '34K|81K', '...|27K', '5.4K|24K', '...|23K', '...|375'], poc: 1, max: 1, hi: 505, lo: 686, body: [576, 641], gap: 597, up: 1, h: '-4.4K', d: '40K', v: '297K', l: '45K' },
  { t: '14:15', k: 2, rows: ['7.6K|8.6K', '23K|60K', '...|63K', '-33K|17K', '-11K|3.8K'], poc: 2, max: 2, hi: 513, lo: 677, body: [584, 666], gap: 596, up: 0, h: '-32K', d: '-14K', v: '320K', l: '-1.3K' },
  { t: '14:45', k: 5, rows: ['8.8K|47K', '-26K|90K', '-61K|28K'], poc: 1, max: 1, hi: 615, lo: 721, body: [671, 684], gap: 668, up: 0, h: '-72K', d: '-78K', v: '408K', l: '-25K' },
  { t: '15:15', k: 5, rows: ['11K|21K', '...|177K'], poc: 1, max: 1, hi: 632, lo: 686, body: [633, 680], gap: 660, up: 1, h: '75', d: '7.1K', v: '389K', l: '2.3K' }
];

const rect = (x, y, w, h, fill, extra = '') => `<rect x="${x}" y="${y}" width="${w}" height="${h}" fill="${fill}" ${extra}/>`;
const text = (x, y, s, cls = '', fill = '') => `<text x="${x}" y="${y + 8}"${cls ? ` class="${cls}"` : ''}${fill ? ` fill="${fill}"` : ''}>${s}</text>`;
const num = s => parseFloat(s) * (s.endsWith('K') ? 1 : 0.001);
const signed = s => (s.startsWith('-') ? RED : GREEN);
const shade = f => `rgb(${[[146, 20], [176, 168], [146, 16]].map(([a, b]) => Math.round(a + (b - a) * f)).join(',')})`;

let out = `<path d="M130 1428H2671M2671 227V1431" stroke="#2b2b2b" stroke-width="2"/>`;
for (let p = 0; p < 9; p++) {
  const y = Math.round(338 + 134.15 * p);
  out += `<path d="M2671 ${y}h8" stroke="#3a3a3a" stroke-width="2"/>` + text(2685, y, (25000 - 50 * p) + '.0', 'start');
}
out += `<path d="M${colX(5)} 248V1428" stroke="#3a3a3a" stroke-width="3" stroke-dasharray="4 4"/>`;
out += rect(929, 227, 20, 20, '#ffa30a') + `<text x="939" y="244" font-size="19" font-weight="600" fill="#fff">D</text>`;

let boxes = '', labels = '';
bars.forEach((b, i) => {
  const c = colX(i), asks = b.rows.map(r => num(r.split('|')[1]));
  const min = b.floor ?? Math.min(...asks), max = b.ceil ?? (asks.length > 1 ? Math.max(...asks) : 100);
  b.rows.forEach((r, n) => {
    const [bid, ask] = r.split('|'), y = rowY(b.k + n), h = rowY(b.k + n + 1) - y;
    out += rect(c - 66, y, 57, h, /^[-.]/.test(bid) ? '#f4142a' : '#14a810');
    out += rect(c + 8, y, 60, h, shade((asks[n] - min) / (max - min)));
    out += text(c - 38, y + 19, bid, bid === '...' ? 'dots' : 'cell-text') + text(c + 38, y + 19, ask, 'cell-text');
    if (b.max === n) boxes += rect(c + 8, y, 61, 41, 'none', 'stroke="#a52a2a" stroke-width="3"');
  });
  const color = b.up ? TEAL : CANDLE_RED;
  if (b.body) {
    out += rect(c - 1, b.hi, 2, b.lo - b.hi, color) + rect(c - 5, b.body[0], 10, b.body[1] - b.body[0], color);
    if (b.gap) out += rect(c - 5, b.gap - 2, 10, 4, '#000');
  }
  if (b.poc !== undefined) boxes += rect(c - 66, rowY(b.k + b.poc), 132, 39, 'none', 'stroke="#ff6a00" stroke-width="4"');
  labels += text(c - 4, b.hi - 137, 'COTH:' + b.h, '', signed(b.h)) + text(c - 4, b.hi - 98, 'Δ:' + b.d, '', signed(b.d)) + text(c - 4, b.hi - 59, 'V:' + b.v, '', BLUE);
  if (b.l) labels += text(c - 4, b.lo + 48, 'COTL:' + b.l, '', signed(b.l));
});
out += boxes + labels;

const lines = [
  ['#fff', 2, [1013, 1067, 1116, 1149, 1165, 1167, 1165, 1159, 1145, 1132, 1126, 1112, 1074, 1040, 1005, 972, 937, 902]],
  ['#b312d0', 2, [1308, 1372, 1382, 1382, 1376, 1330, 1263, 1202, 1114, 1027, 946, 855, 764, 700, 634, 616, 614, 603]],
  ['#dc2328', 4, [1235, 1233, 1231, 1227, 1225, 1219, 1214, 1208, 1201, 1193, 1191, 1187, 1184, 1180, 1172, 1166, 1160, 1153]]
];
for (const [color, w, ys] of lines) {
  out += `<polyline fill="none" stroke="${color}" stroke-width="${w}" points="${ys.map((y, i) => colX(i) + ',' + y).join(' ')}"/>`;
}
out += `<path d="M130 632H2671" stroke="${TEAL}" stroke-width="2" stroke-dasharray="12 4"/>`;
out += `<path d="M2672 632l14-20h95v40h-95z" fill="${TEAL}"/>` + text(2693, 633, '24890.0', 'start');
out += `<circle cx="2574" cy="1392" r="23" fill="#14161f" stroke="#d010e8" stroke-width="3"/><text x="2574" y="1400" fill="#d010e8">N</text>`;
document.getElementById('plot').innerHTML = out;

let axis = `<path d="M130 1567H2671V1548" fill="none" stroke="#3a3a3a" stroke-width="2"/>` + text(2685, 1548, '0.000', 'start');
bars.forEach((b, i) => {
  axis += `<path d="M${colX(i)} 1567v8" stroke="#3a3a3a" stroke-width="2"/>` + text(colX(i), 1590, b.t, '', '#fff');
});
document.getElementById('axis').innerHTML = axis;

const heat = {
  VWAP: '24588 24573 24558 24634 24660 24742 24837 24820 24922 24926 24872 24916 24934 24919 24908 24908 24876 24880',
  'OI Chng': '59.33K 22.35K -123.38K -143.25K -58.95K -1.06M 75.68K -28.13K 62.93K 45.53K -6.6K 46.43K 71.63K 99.15K 89.03K 101.18K 21.98K 21.68K',
  'Cum ▲': '-1.04M -1.05M -1M -900.38K -875.85K 492.75K 735.98K 712.65K 1.05M 1.05M 963.08K 1.06M 1.13M 1.11M 1.15M 1.14M 1.06M 1.07M'
};
const cumColors = '#f31629 #f41429 #ef182e #eb2639 #ea2839 #5aaf5a #43ae40 #45ae43 #22aa1c #22aa1c #2ba928 #20aa1b #14a80f #18a814 #12a80d #13a80e #20aa1b #1eaa19'.split(' ');
document.getElementById('heat').innerHTML = Object.entries(heat).map(([name, vals], r) => {
  const tds = vals.split(' ').map((v, i) => {
    const attr = r === 1 ? ` class="${v[0] === '-' ? 'down' : 'up'}"` : r === 2 ? ` style="background:${cumColors[i]}"` : '';
    return `<td${attr}>${v}</td>`;
  }).join('');
  return `<tr class="${r ? '' : 'vwap'}">${tds}<td class="gap"></td><th scope="row">${name}</th></tr>`;
}).join('');
```
